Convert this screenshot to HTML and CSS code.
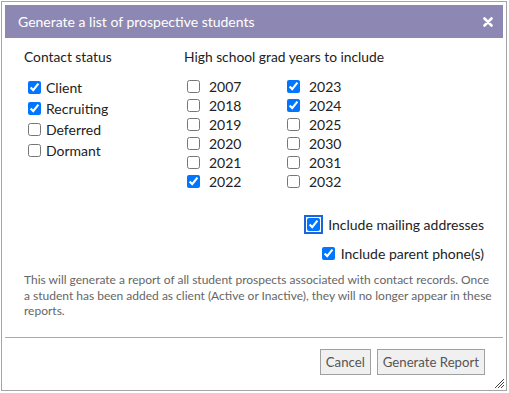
FILE: index.html
```html
<!DOCTYPE html>
<html>
<head>
<meta charset="utf-8">
<link rel="stylesheet" href="styles.css">
</head>
<body>
<div class="dialog">
  <div class="titlebar">
    <span class="title">Generate a list of prospective students</span>
    <svg class="close" width="10" height="10" viewBox="0 0 10 10"><path d="M1.5 1.5 L8.5 8.5 M8.5 1.5 L1.5 8.5" stroke="#fff" stroke-width="2.6" stroke-linecap="round"/></svg>
  </div>
  <div class="content">
    <div class="cols">
      <div class="col-status">
        <div class="heading">Contact status</div>
        <label class="row-status"><input type="checkbox" checked><span>Client</span></label>
        <label class="row-status"><input type="checkbox" checked><span>Recruiting</span></label>
        <label class="row-status"><input type="checkbox"><span>Deferred</span></label>
        <label class="row-status"><input type="checkbox"><span>Dormant</span></label>
      </div>
      <div class="col-years">
        <div class="heading">High school grad years to include</div>
        <div class="years">
          <label class="row-year"><input type="checkbox"><span>2007</span></label>
          <label class="row-year"><input type="checkbox"><span>2018</span></label>
          <label class="row-year"><input type="checkbox"><span>2019</span></label>
          <label class="row-year"><input type="checkbox"><span>2020</span></label>
          <label class="row-year"><input type="checkbox"><span>2021</span></label>
          <label class="row-year"><input type="checkbox" checked><span>2022</span></label>
          <label class="row-year"><input type="checkbox" checked><span>2023</span></label>
          <label class="row-year"><input type="checkbox" checked><span>2024</span></label>
          <label class="row-year"><input type="checkbox"><span>2025</span></label>
          <label class="row-year"><input type="checkbox"><span>2030</span></label>
          <label class="row-year"><input type="checkbox"><span>2031</span></label>
          <label class="row-year"><input type="checkbox"><span>2032</span></label>
        </div>
      </div>
    </div>
    <div class="options">
      <label class="row-opt mailing"><input type="checkbox" class="focused" checked><span>Include mailing addresses</span></label>
      <label class="row-opt phone"><input type="checkbox" checked><span>Include parent phone(s)</span></label>
    </div>
    <p class="note">This will generate a report of all student prospects associated with contact records. Once a student has been added as client (Active or Inactive), they will no longer appear in these reports.</p>
  </div>
  <div class="buttonpane">
    <button class="btn">Cancel</button>
    <button class="btn">Generate Report</button>
  </div>
  <svg class="resize" width="12" height="12" viewBox="0 0 12 12"><path d="M11 2 L2 11 M11 5 L5 11 M11 8 L8 11" stroke="#444" stroke-width="1"/></svg>
</div>
</body>
</html>
```

FILE: styles.css
```css
html, body {
  margin: 0;
  padding: 0;
  background: #ffffff;
}
body {
  font-family: Lato, "Open Sans", sans-serif;
  color: #222;
  width: 509px;
  height: 393px;
  overflow: hidden;
}
.dialog {
  position: relative;
  box-sizing: border-box;
  margin: 1px 0 0 1px;
  width: 506px;
  height: 390px;
  border: 1px solid #a5a5a5;
  padding: 3px;
  background: #fff;
  display: flex;
  flex-direction: column;
}
.titlebar {
  height: 33px;
  background: #8d88b3;
  display: flex;
  align-items: center;
  justify-content: space-between;
  padding: 0 10px 0 13px;
  flex: none;
}
.title {
  color: #fff;
  font-size: 14px;
  font-weight: 400;
}
.close {
  display: block;
}
.content {
  padding: 10px 19px 0 19px;
  flex: none;
}
.cols {
  display: flex;
}
.col-status {
  width: 160px;
}
.heading {
  font-size: 13.8px;
  line-height: 17px;
  height: 17px;
  margin-bottom: 12px;
  color: #222;
}
label {
  display: flex;
  align-items: center;
  font-size: 14px;
  color: #222;
}
input[type="checkbox"] {
  margin: 0;
  width: 13px;
  height: 13px;
  flex: none;
}
.row-status {
  height: 21px;
  padding-left: 4px;
  gap: 5px;
}
.years {
  display: grid;
  grid-template-columns: 100px 100px;
  grid-template-rows: repeat(6, 19px);
  grid-auto-flow: column;
}
.row-year {
  height: 19px;
  padding-left: 3px;
  gap: 9px;
}
.options {
  display: flex;
  flex-direction: column;
  align-items: flex-end;
  margin-top: 23px;
  gap: 8px;
}
.row-opt {
  height: 21px;
}
.mailing {
  gap: 8px;
}
.phone {
  gap: 6px;
}
.focused {
  outline: 2px solid #1b66d8;
  outline-offset: 1px;
  border-radius: 3px;
}
.note {
  margin: 8px -8px 0 0;
  font-size: 12px;
  line-height: 15.5px;
  color: #666;
}
.buttonpane {
  margin-top: auto;
  border-top: 1px solid #aaa;
  display: flex;
  justify-content: flex-end;
  gap: 6px;
  padding: 11px 18px 12px 0;
}
.btn {
  font-family: Lato, "Open Sans", sans-serif;
  font-size: 13.2px;
  color: #555;
  background: #f0f0f0;
  border: 1px solid #a0a0a0;
  height: 26px;
  padding: 0 5px;
  border-radius: 0;
}
.resize {
  position: absolute;
  right: 1px;
  bottom: 1px;
}
```
